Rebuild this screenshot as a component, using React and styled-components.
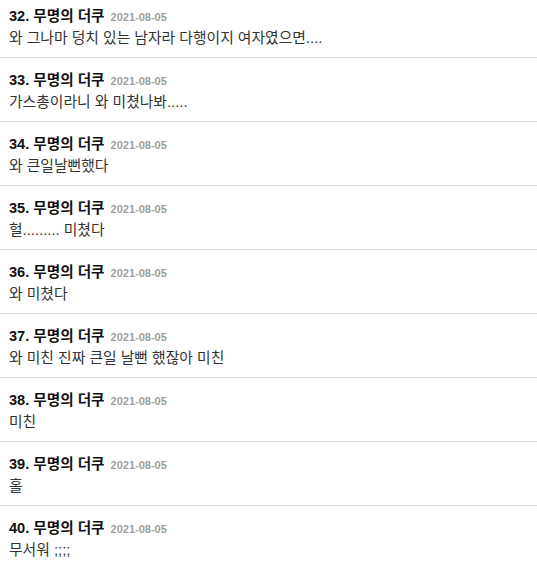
import React from 'react';
import styled, { createGlobalStyle } from 'styled-components';

const GlobalStyle = createGlobalStyle`
	body {
		margin: 0;
		background: #fff;
		font-family: "Liberation Sans", "Noto Sans CJK KR", sans-serif;
	}
`;

const List = styled.ul`
	list-style: none;
	margin: 0;
	padding: 0;
`;

const Item = styled.li`
	padding: 11px 9px 8px;
	border-bottom: 1px solid #dcdcdc;

	&:first-child {
		padding-top: 5px;
	}
	&:last-child {
		border-bottom: none;
	}
`;

const Head = styled.div`
	display: flex;
	align-items: baseline;
	height: 22px;
	line-height: 22px;
`;

const Name = styled.span`
	font-size: 14.6px;
	font-weight: bold;
	color: #111;
`;

const Date = styled.span`
	margin-left: 6px;
	font-size: 11px;
	font-weight: bold;
	color: #a0a0a0;
`;

const Text = styled.div`
	height: 22px;
	font-size: 14.8px;
	line-height: 22px;
	color: #333;
`;

const comments = [
	{ no: 32, text: '와 그나마 덩치 있는 남자라 다행이지 여자였으면....' },
	{ no: 33, text: '가스총이라니 와 미쳤나봐.....' },
	{ no: 34, text: '와 큰일날뻔했다' },
	{ no: 35, text: '헐......... 미쳤다' },
	{ no: 36, text: '와 미쳤다' },
	{ no: 37, text: '와 미친 진짜 큰일 날뻔 했잖아 미친' },
	{ no: 38, text: '미친' },
	{ no: 39, text: '홀' },
	{ no: 40, text: '무서워 ;;;;' },
];

export default function App() {
	return (
		<>
			<GlobalStyle />
			<List>
				{comments.map((c) => (
					<Item key={c.no}>
						<Head>
							<Name>{c.no}. 무명의 더쿠</Name>
							<Date>2021-08-05</Date>
						</Head>
						<Text>{c.text}</Text>
					</Item>
				))}
			</List>
		</>
	);
}
